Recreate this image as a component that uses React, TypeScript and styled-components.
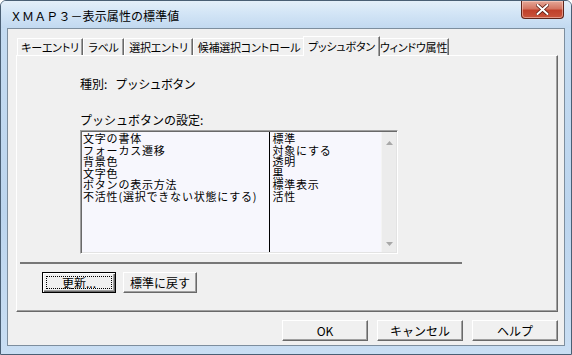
import React from "react";
import styled, { createGlobalStyle, css } from "styled-components";

const GlobalStyle = createGlobalStyle`
  html, body { margin: 0; padding: 0; background: #ffffff; }
  body { font-family: "Noto Sans CJK JP", "Noto Sans", sans-serif; }
  * { box-sizing: border-box; }
`;

const Window = styled.div`
  width: 572px;
  height: 355px;
  display: flex;
  flex-direction: column;
  border: 1px solid #4a5f74;
  border-radius: 6px 6px 0 0;
  background: linear-gradient(180deg, #d6e7f7 0%, #c4dbf1 8%, #bcd5ee 60%, #c9def3 100%);
  overflow: hidden;
`;

const TitleBar = styled.div`
  height: 27px;
  display: flex;
  align-items: flex-start;
  justify-content: space-between;
  padding-left: 9px;
  background: linear-gradient(180deg, #e4eff9 0%, #d3e5f6 45%, #c2d9f0 100%);
`;

const Title = styled.div`
  margin-top: 7px;
  font-size: 12px;
  line-height: 16px;
  color: #000;
  letter-spacing: 0.1px;
`;

const CloseButton = styled.div`
  width: 43px;
  height: 18px;
  margin-right: 7px;
  border: 1px solid #5e241a;
  border-top: none;
  border-radius: 0 0 4px 4px;
  background: linear-gradient(180deg, #e6a898 0%, #d47562 45%, #c0402a 55%, #c9543c 100%);
  box-shadow: inset 0 0 0 1px rgba(255, 220, 210, 0.5);
  display: flex;
  align-items: center;
  justify-content: center;
`;

const Client = styled.div`
  margin: 0 6px;
  height: 318px;
  border: 1px solid #7d8e9e;
  background: #f0f0f0;
  padding: 7px 6px 0 8px;
  display: flex;
  flex-direction: column;
`;

const TabStrip = styled.div`
  height: 19px;
  display: flex;
  align-items: flex-end;
  padding-left: 1px;
  position: relative;
  z-index: 1;
`;

const Tab = styled.div<{ $w: number; $active?: boolean }>`
  width: ${(p) => p.$w}px;
  height: 17px;
  font-size: 11px;
  font-feature-settings: "palt";
  letter-spacing: -0.2px;
  line-height: 17px;
  text-align: center;
  color: #000;
  background: #f0f0f0;
  border-top: 1px solid #ffffff;
  border-left: 1px solid #ffffff;
  border-right: 1px solid #696969;
  box-shadow: inset -1px 0 0 #a0a0a0;
  white-space: nowrap;
  overflow: hidden;
  ${(p) =>
    p.$active &&
    css`
      height: 20px;
      margin: 0 -2px -1px -2px;
      line-height: 18px;
      position: relative;
      z-index: 2;
    `}
`;

const Panel = styled.div`
  height: 257px;
  border-top: 1px solid #ffffff;
  border-left: 1px solid #ffffff;
  border-right: 1px solid #696969;
  border-bottom: 1px solid #696969;
  box-shadow: inset -1px -1px 0 #a0a0a0;
  padding: 21px 0 0 3px;
  display: flex;
  flex-direction: column;
`;

const Upper = styled.div`
  padding-left: 60px;
  display: flex;
  flex-direction: column;
`;

const Label = styled.div<{ $mt?: number }>`
  font-size: 12px;
  line-height: 14px;
  color: #000;
  margin-top: ${(p) => p.$mt ?? 0}px;
  white-space: nowrap;
  display: flex;
`;

const Value = styled.span`
  margin-left: 8px;
  letter-spacing: -0.6px;
`;

const ListBox = styled.div`
  margin-top: 3px;
  width: 318px;
  height: 124px;
  border-top: 1px solid #a0a0a0;
  border-left: 1px solid #a0a0a0;
  border-right: 1px solid #ffffff;
  border-bottom: 1px solid #ffffff;
  box-shadow: inset 1px 1px 0 #696969, inset -1px -1px 0 #e3e3e3;
  background: #f7f7fd;
  padding: 1px 1px 1px 2px;
  display: flex;
`;

const Column = styled.div<{ $w: number; $divider?: boolean }>`
  width: ${(p) => p.$w}px;
  display: flex;
  flex-direction: column;
  padding-top: 1px;
  padding-left: ${(p) => (p.$divider ? 2 : 0)}px;
  border-left: ${(p) => (p.$divider ? "1px solid #000" : "none")};
`;

const Cell = styled.div`
  font-size: 11px;
  letter-spacing: 0.8px;
  line-height: 11.6px;
  height: 11.6px;
  color: #000;
  white-space: nowrap;
`;

const ScrollBar = styled.div`
  margin-left: auto;
  width: 15px;
  display: flex;
  flex-direction: column;
  justify-content: space-between;
  align-items: center;
  background: #ececec;
  border-left: 1px solid #f4f4f4;
  padding: 9px 0 6px;
`;

const Separator = styled.div`
  margin-top: 8px;
  width: 442px;
  height: 2px;
  background: #777777;
`;

const ButtonRow = styled.div<{ $justify?: string; $gap: number; $pl?: number; $mt: number }>`
  display: flex;
  justify-content: ${(p) => p.$justify ?? "flex-start"};
  gap: ${(p) => p.$gap}px;
  padding-left: ${(p) => p.$pl ?? 0}px;
  margin-top: ${(p) => p.$mt}px;
`;

const Button = styled.div<{ $w: number; $default?: boolean }>`
  width: ${(p) => p.$w}px;
  height: 21px;
  background: #f0f0f0;
  font-size: 12px;
  color: #000;
  display: flex;
  align-items: center;
  justify-content: center;
  position: relative;
  border-top: 1px solid #ffffff;
  border-left: 1px solid #ffffff;
  border-right: 1px solid #696969;
  border-bottom: 1px solid #696969;
  box-shadow: inset -1px -1px 0 #a0a0a0;
  ${(p) =>
    p.$default &&
    css`
      border: 1px solid #000;
      box-shadow: inset 1px 1px 0 #ffffff, inset -1px -1px 0 #696969, inset -2px -2px 0 #a0a0a0;
    `}
`;

const FocusRing = styled.div`
  position: absolute;
  inset: 3px;
  border: 1px dotted #000;
  pointer-events: none;
`;

const Arrow = ({ up }: { up?: boolean }) => (
  <svg width="7" height="4" viewBox="0 0 7 4">
    <path d={up ? "M0 4 L3.5 0 L7 4 Z" : "M0 0 L3.5 4 L7 0 Z"} fill="#a8a8a8" />
  </svg>
);

const tabs = [
  { label: "キーエントリ", w: 66 },
  { label: "ラベル", w: 41 },
  { label: "選択エントリ", w: 69 },
  { label: "候補選択コントロール", w: 112 },
  { label: "プッシュボタン", w: 77, active: true },
  { label: "ウィンドウ属性", w: 71 },
];

const rows: [string, string][] = [
  ["文字の書体", "標準"],
  ["フォーカス遷移", "対象にする"],
  ["背景色", "透明"],
  ["文字色", "黒"],
  ["ボタンの表示方法", "標準表示"],
  ["不活性(選択できない状態にする)", "活性"],
];

export default function App() {
  return (
    <>
      <GlobalStyle />
      <Window>
        <TitleBar>
          <Title>ＸＭＡＰ３－表示属性の標準値</Title>
          <CloseButton>
            <svg width="13" height="11" viewBox="0 0 13 11">
              <path
                d="M1.5 1 L11.5 10 M11.5 1 L1.5 10"
                stroke="#5a1a10"
                strokeWidth="3.6"
                strokeLinecap="round"
              />
              <path
                d="M1.5 1 L11.5 10 M11.5 1 L1.5 10"
                stroke="#ffffff"
                strokeWidth="2"
                strokeLinecap="round"
              />
            </svg>
          </CloseButton>
        </TitleBar>
        <Client>
          <TabStrip>
            {tabs.map((t) => (
              <Tab key={t.label} $w={t.w} $active={t.active}>
                {t.label}
              </Tab>
            ))}
          </TabStrip>
          <Panel>
            <Upper>
              <Label>
                種別:<Value>プッシュボタン</Value>
              </Label>
              <Label $mt={22}>プッシュボタンの設定:</Label>
              <ListBox>
                <Column $w={187}>
                  {rows.map((r) => (
                    <Cell key={r[0]}>{r[0]}</Cell>
                  ))}
                </Column>
                <Column $w={112} $divider>
                  {rows.map((r) => (
                    <Cell key={r[0]}>{r[1]}</Cell>
                  ))}
                </Column>
                <ScrollBar>
                  <Arrow up />
                  <Arrow />
                </ScrollBar>
              </ListBox>
            </Upper>
            <Separator />
            <ButtonRow $gap={7} $pl={22} $mt={8}>
              <Button $w={74} $default>
                更新...
                <FocusRing />
              </Button>
              <Button $w={74}>標準に戻す</Button>
            </ButtonRow>
          </Panel>
          <ButtonRow $justify="flex-end" $gap={9} $mt={8}>
            <Button $w={86}>OK</Button>
            <Button $w={86}>キャンセル</Button>
            <Button $w={86}>ヘルプ</Button>
          </ButtonRow>
        </Client>
      </Window>
    </>
  );
}
